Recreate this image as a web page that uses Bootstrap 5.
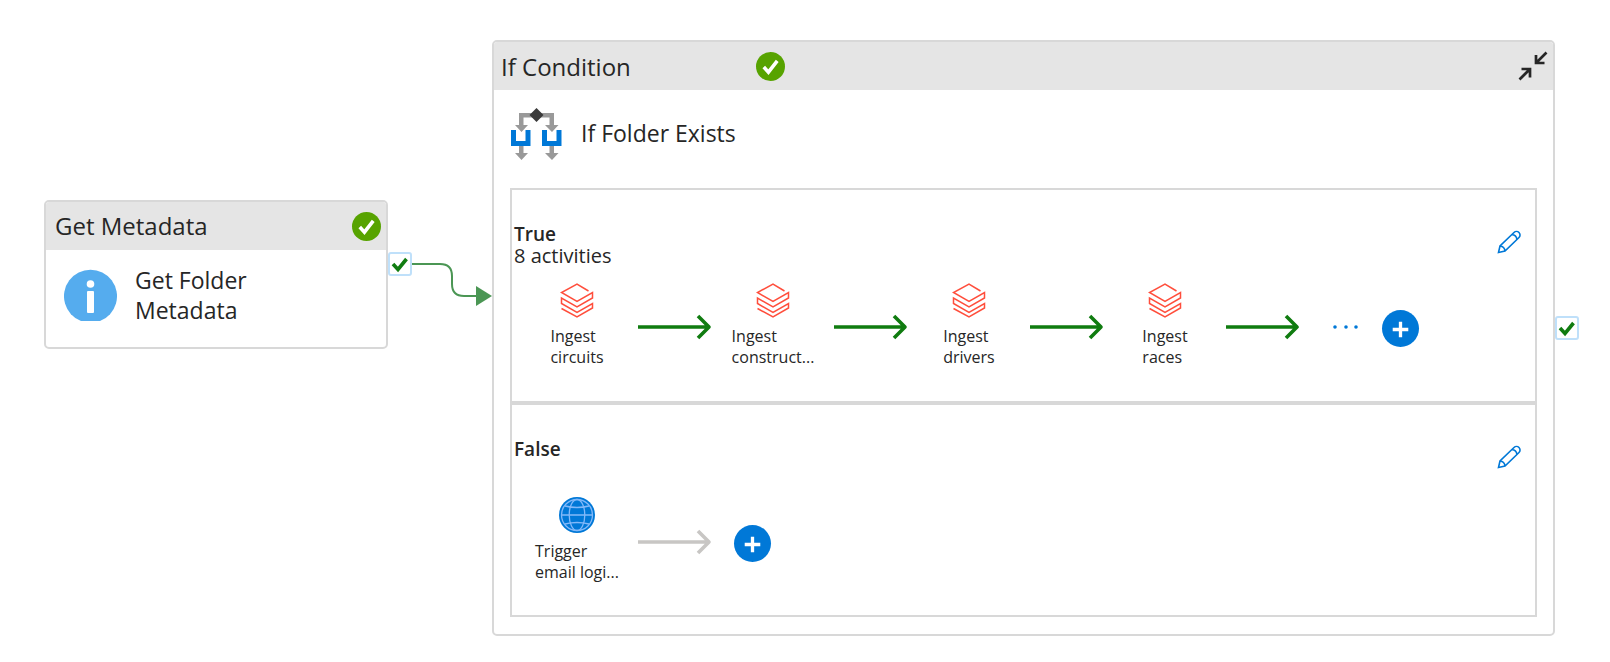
<!DOCTYPE html>
<html lang="en">
<head>
<meta charset="utf-8">
<meta name="viewport" content="width=device-width, initial-scale=1">
<title>Pipeline</title>
<link href="https://cdn.jsdelivr.net/npm/bootstrap@5.3.0/dist/css/bootstrap.min.css" rel="stylesheet">
<style>
body{font-family:"Open Sans","Noto Sans",sans-serif;color:#262626;background:#fff}
svg{display:block;flex:none}
.pipeline{padding:40px 31px 24px 44px}
.activity{border:2px solid #d8d8d8;border-radius:5px;background:#fff;overflow:hidden}
.activity-metadata{width:344px;margin-top:160px;flex:none}
.activity-head{background:#e5e5e5;height:48px;font-size:24px;line-height:32px}
.activity-metadata .activity-head{padding:0 5px 0 9px}
.activity-if .activity-head{padding:0 5px 0 7px}
.head-title{width:255px;padding-top:1px}
.metadata-body{padding:15px 18px 20px;gap:18px;font-size:23px;line-height:30px;min-height:97px}
.metadata-body svg{margin-bottom:-1px}
.link-out{width:104px;margin-top:212px;flex:none}
.port{width:24px;height:24px;border:2px solid #bfe0fa;border-radius:3px;background:#fff;flex:none}
.port-end{margin-top:276px}
.if-title{padding:18px 17px 27px;gap:18px;font-size:23px;line-height:32px}
.if-title span{padding-bottom:4px}
.branches{margin:0 16px 17px;border:2px solid #d8d8d8}
.branch{min-height:211px;padding:33px 14px 0 2px}
.branch + .branch{border-top:4px solid #d8d8d8;min-height:214px}
.branch-head{min-height:59px;font-size:20px;line-height:22px}
.branch-head h3{font-size:19px;line-height:22px;font-weight:600}
.branch-head button{margin-top:7px}
.flow{padding-left:2px}
.step{width:122px;font-size:16px;line-height:21px}
.step p{margin:8px 0 0}
.flow > svg{margin-top:31px}
.plain{border:0;background:none;padding:0;color:#0078d7}
.more{margin:43px 21px 0 31px}
.add{width:37px;height:37px;border:0;padding:0;border-radius:50%;background:#0078d7;margin-top:28px}
.add-alone{margin-left:22px}
</style>
</head>
<body>
<svg width="0" height="0" class="position-absolute" aria-hidden="true">
<defs>
<symbol id="ok" viewBox="0 0 28 28"><circle cx="14" cy="14" r="14" fill="#57a300"/><path d="M7.500 14.500l4.500 5 8.500-11" fill="none" stroke="#fff" stroke-width="3.400"/></symbol>
<symbol id="tick" viewBox="0 0 20 20"><path d="M3 10l5 5.500 8.500-10.500" fill="none" stroke="#107c10" stroke-width="3.600"/></symbol>
<symbol id="stack" viewBox="0 0 34 36"><path d="M28.500 9L17 2 1.500 10.500 17 19.500l15.500-9v5.500L17 25 1.500 16v5.500L17 30.500l15.500-9V26L17 35 1.500 26.500" fill="none" stroke="#ff3621" stroke-opacity=".88" stroke-width="1.500"/></symbol>
<symbol id="arrow" viewBox="0 0 74 28"><path d="M0 14h70M60 3l11 11-11 11" fill="none" stroke="currentColor" stroke-width="3.600" stroke-linejoin="round"/></symbol>
<symbol id="pencil" viewBox="0 0 24 24"><path d="M1.500 22.500L3 16 17 2.500a3.500 3.500 0 0 1 5 5L8 21zM3 16c2.800.3 4.700 2.200 5 5M15 4.500c2.500.2 4.500 2.200 5 5" fill="none" stroke="currentColor" stroke-width="1.600"/></symbol>
<symbol id="plus" viewBox="0 0 38 38"><path d="M19 12v16M11 20h16" stroke="#fff" stroke-width="3.400"/></symbol>
</defs>
</svg>
<main class="pipeline d-flex align-items-start">
  <section class="activity activity-metadata">
    <div class="activity-head d-flex align-items-center justify-content-between">
      <span>Get Metadata</span><svg width="29" height="29"><use href="#ok"/></svg>
    </div>
    <div class="metadata-body d-flex">
      <svg width="53" height="60" viewBox="0 0 53 60"><path d="M17 56A26.500 26.500 0 1 1 36 56z" fill="#55acee"/><circle cx="26.500" cy="19" r="3.800" fill="#fff"/><rect x="23" y="26" width="7" height="22" rx="1" fill="#fff"/></svg>
      <div>Get Folder<br>Metadata</div>
    </div>
  </section>
  <div class="link-out d-flex align-items-start">
    <div class="port"><svg width="20" height="20"><use href="#tick"/></svg></div>
    <svg width="80" height="60" viewBox="0 0 80 60"><path d="M0 12h28q12 0 12 12v8q0 12 12 12h14" fill="none" stroke="#4b9654" stroke-width="2"/><path d="M64 34l16 10-16 10z" fill="#4b9654"/></svg>
  </div>
  <section class="activity activity-if flex-grow-1">
    <div class="activity-head d-flex align-items-center">
      <span class="head-title">If Condition</span><svg width="29" height="29"><use href="#ok"/></svg>
      <button class="plain ms-auto" aria-label="Collapse"><svg width="30" height="30" viewBox="0 0 30 30"><path d="M28.500 1.500L18.500 11.500M18 4v8h8.500M1.500 28.500L11.500 18.500M3.500 18H12v8.500" fill="none" stroke="#262626" stroke-width="2.700"/></svg></button>
    </div>
    <div class="if-title d-flex align-items-center">
      <svg width="52" height="53" viewBox="0 0 52 53"><path d="M8 17V5h35v12h4.500L41 24l-7-7h4.500V9.500h-26V17H17l-6.500 7L4 17zM8 38h4.500v7H17l-6.500 7L4 45h4zM38.500 38H43v7h4.500L41 52l-7-7h4.500z" fill="#999"/><path d="M25.500 0l7 7-7 7-7-7z" fill="#3a3a3a"/><path d="M0 22h5v11h9.500V22h5v16H0zM31 22h5v11h9.500V22h5v16H31z" fill="#0078d7"/></svg>
      <span>If Folder Exists</span>
    </div>
    <div class="branches">
      <div class="branch">
        <div class="branch-head d-flex justify-content-between align-items-start">
          <div><h3 class="mb-0">True</h3>8 activities</div>
          <button class="plain" aria-label="Edit true activities"><svg width="24" height="24"><use href="#pencil"/></svg></button>
        </div>
        <div class="flow d-flex align-items-start">
          <div class="step d-flex flex-column align-items-center"><svg width="34" height="36"><use href="#stack"/></svg><p>Ingest<br>circuits</p></div>
          <svg width="74" height="28" color="#107c10"><use href="#arrow"/></svg>
          <div class="step d-flex flex-column align-items-center"><svg width="34" height="36"><use href="#stack"/></svg><p>Ingest<br>construct...</p></div>
          <svg width="74" height="28" color="#107c10"><use href="#arrow"/></svg>
          <div class="step d-flex flex-column align-items-center"><svg width="34" height="36"><use href="#stack"/></svg><p>Ingest<br>drivers</p></div>
          <svg width="74" height="28" color="#107c10"><use href="#arrow"/></svg>
          <div class="step d-flex flex-column align-items-center"><svg width="34" height="36"><use href="#stack"/></svg><p>Ingest<br>races</p></div>
          <svg width="74" height="28" color="#107c10"><use href="#arrow"/></svg>
          <button class="plain more" aria-label="More activities"><svg width="30" height="4" viewBox="0 0 30 4"><path d="M4 2h0M15 2h0M25 2h0" stroke="#0078d7" stroke-width="3.600" stroke-linecap="round"/></svg></button>
          <button class="add" aria-label="Add activity"><svg width="37" height="37"><use href="#plus"/></svg></button>
        </div>
      </div>
      <div class="branch">
        <div class="branch-head d-flex justify-content-between align-items-start">
          <h3 class="mb-0">False</h3>
          <button class="plain" aria-label="Edit false activities"><svg width="24" height="24"><use href="#pencil"/></svg></button>
        </div>
        <div class="flow d-flex align-items-start">
          <div class="step d-flex flex-column align-items-center"><svg width="36" height="36" viewBox="0 0 36 36"><circle cx="18" cy="18" r="18" fill="#0078d7"/><g fill="none" stroke="#83b9f9" stroke-width="1.300"><circle cx="18" cy="18" r="15.500"/><ellipse cx="18" cy="18" rx="7.800" ry="15.500"/><path d="M2.500 18h31M6 9q12 3 24 0M6 27q12-3 24 0"/></g></svg><p>Trigger<br>email logi...</p></div>
          <svg width="74" height="28" color="#c8c6c4"><use href="#arrow"/></svg>
          <button class="add add-alone" aria-label="Add activity"><svg width="37" height="37"><use href="#plus"/></svg></button>
        </div>
      </div>
    </div>
  </section>
  <div class="port port-end"><svg width="20" height="20"><use href="#tick"/></svg></div>
</main>
<script src="https://cdn.jsdelivr.net/npm/bootstrap@5.3.0/dist/js/bootstrap.bundle.min.js"></script>
</body>
</html>
